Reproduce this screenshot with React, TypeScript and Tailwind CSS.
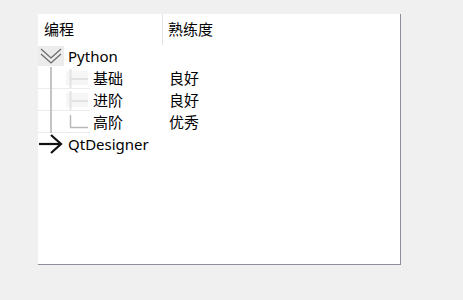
import React from "react";

const font = { fontFamily: '"Segoe UI","Noto Sans","Noto Sans CJK SC",sans-serif' };

function Chevrons() {
  return (
    <div className="w-[26px] h-[20px] bg-[#ececec] flex items-center justify-center">
      <svg width="24" height="20" viewBox="0 0 24 20">
        <polyline points="2,3 12,12 22,3" fill="none" stroke="#6b6b6b" strokeWidth="1.3" />
        <polyline points="2,8 12,17 22,8" fill="none" stroke="#6b6b6b" strokeWidth="1.3" />
      </svg>
    </div>
  );
}

function Arrow() {
  return (
    <svg width="26" height="22" viewBox="0 0 26 22">
      <line x1="1" y1="11" x2="23" y2="11" stroke="#111" strokeWidth="2.2" />
      <polyline points="13,2 23,11 13,20" fill="none" stroke="#111" strokeWidth="2.2" />
    </svg>
  );
}

function Branch({ last }: { last?: boolean }) {
  return (
    <svg width="26" height="22" viewBox="0 0 26 22">
      {last ? (
        <>
          <line x1="6.5" y1="4" x2="6.5" y2="16.5" stroke="#b8b8b8" strokeWidth="1.5" />
          <line x1="6" y1="16.5" x2="24" y2="16.5" stroke="#b8b8b8" strokeWidth="1.5" />
        </>
      ) : (
        <>
          <rect x="2" y="4" width="22" height="14" fill="#f6f6f6" />
          <line x1="6.5" y1="2" x2="6.5" y2="22" stroke="#e2e2e2" strokeWidth="2" />
          <line x1="6" y1="12" x2="24" y2="12" stroke="#e2e2e2" strokeWidth="2" />
        </>
      )}
    </svg>
  );
}

function ChildRow({ name, level, last }: { name: string; level: string; last?: boolean }) {
  return (
    <div className="flex h-[22px] items-center relative">
      <div className="absolute left-0 bottom-0 w-[52px] h-px bg-[#ececec]" />
      <div className="w-[125px] flex items-center h-full">
        <div className="w-[26px] h-full relative">
          <div className="absolute left-[12px] top-0 bottom-0 w-[2px] bg-[#c4c4c4]" />
        </div>
        <Branch last={last} />
        <span className="ml-[3px] text-[15px] text-black leading-none">{name}</span>
      </div>
      <span className="ml-[6px] text-[15px] text-black leading-none">{level}</span>
    </div>
  );
}

export default function App() {
  return (
    <div className="w-[463px] h-[300px] bg-[#f0f0f0] pt-[14px] pl-[38px]" style={font}>
      <div className="w-[363px] h-[251px] bg-white border-r border-b border-[#8a8f98] flex flex-col">
        <div className="flex h-[31px] items-center">
          <div className="w-[125px] h-full flex items-center pl-[6px] border-r border-[#e3e3e3] text-[15px] text-black">
            编程
          </div>
          <div className="pl-[5px] text-[15px] text-black">熟练度</div>
        </div>
        <div className="flex h-[22px] items-center">
          <Chevrons />
          <span className="ml-[4px] text-[15px] text-black leading-none">Python</span>
        </div>
        <ChildRow name="基础" level="良好" />
        <ChildRow name="进阶" level="良好" />
        <ChildRow name="高阶" level="优秀" last />
        <div className="flex h-[22px] items-center">
          <div className="w-[26px] flex items-center justify-center">
            <Arrow />
          </div>
          <span className="ml-[4px] text-[15px] text-black leading-none">QtDesigner</span>
        </div>
      </div>
    </div>
  );
}
